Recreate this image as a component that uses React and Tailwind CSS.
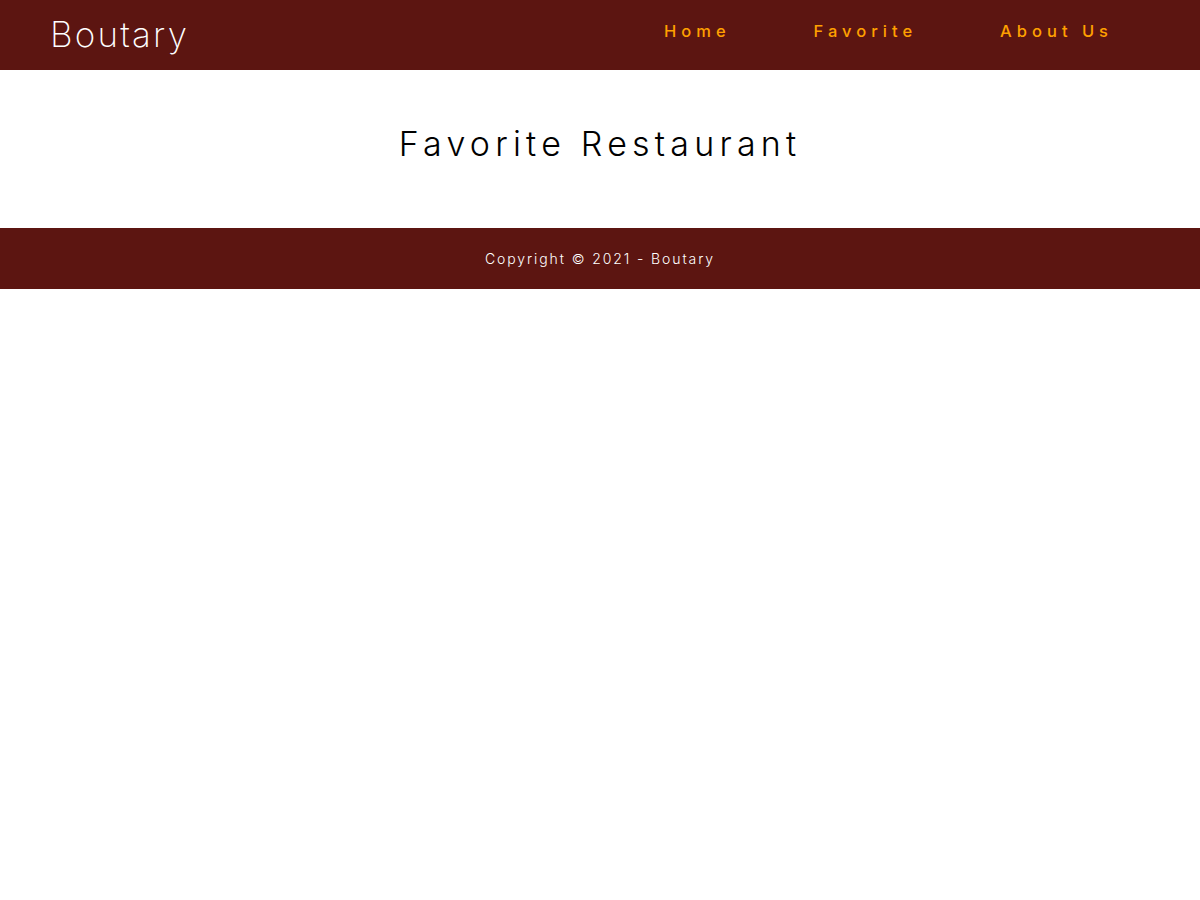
export default function App() {
  return (
    <div className="min-h-[900px] bg-white font-['Inter',sans-serif]">
      {/* Header */}
      <header className="h-[70px] bg-[#5c1511] flex items-center justify-between pl-[50px] pr-[87px]">
        <a className="text-white text-[35px] font-extralight tracking-[2.2px] leading-none pb-[2px]">Boutary</a>
        <nav className="flex items-center gap-[83px] pb-[8px]">
          <a className="text-[#ffa000] text-[16.5px] font-medium tracking-[5px]">Home</a>
          <a className="text-[#ffa000] text-[16.5px] font-medium tracking-[5px]">Favorite</a>
          <a className="text-[#ffa000] text-[16.5px] font-medium tracking-[5px]">About Us</a>
        </nav>
      </header>

      {/* Content */}
      <main className="h-[158px] flex items-center justify-center pb-[12px]">
        <h2 className="text-black text-[34px] font-light tracking-[5.2px]">Favorite Restaurant</h2>
      </main>

      {/* Footer */}
      <footer className="h-[61px] bg-[#5c1511] flex items-center justify-center">
        <p className="text-white text-[14px] font-light tracking-[1.9px]">Copyright © 2021 - Boutary</p>
      </footer>
    </div>
  )
}
